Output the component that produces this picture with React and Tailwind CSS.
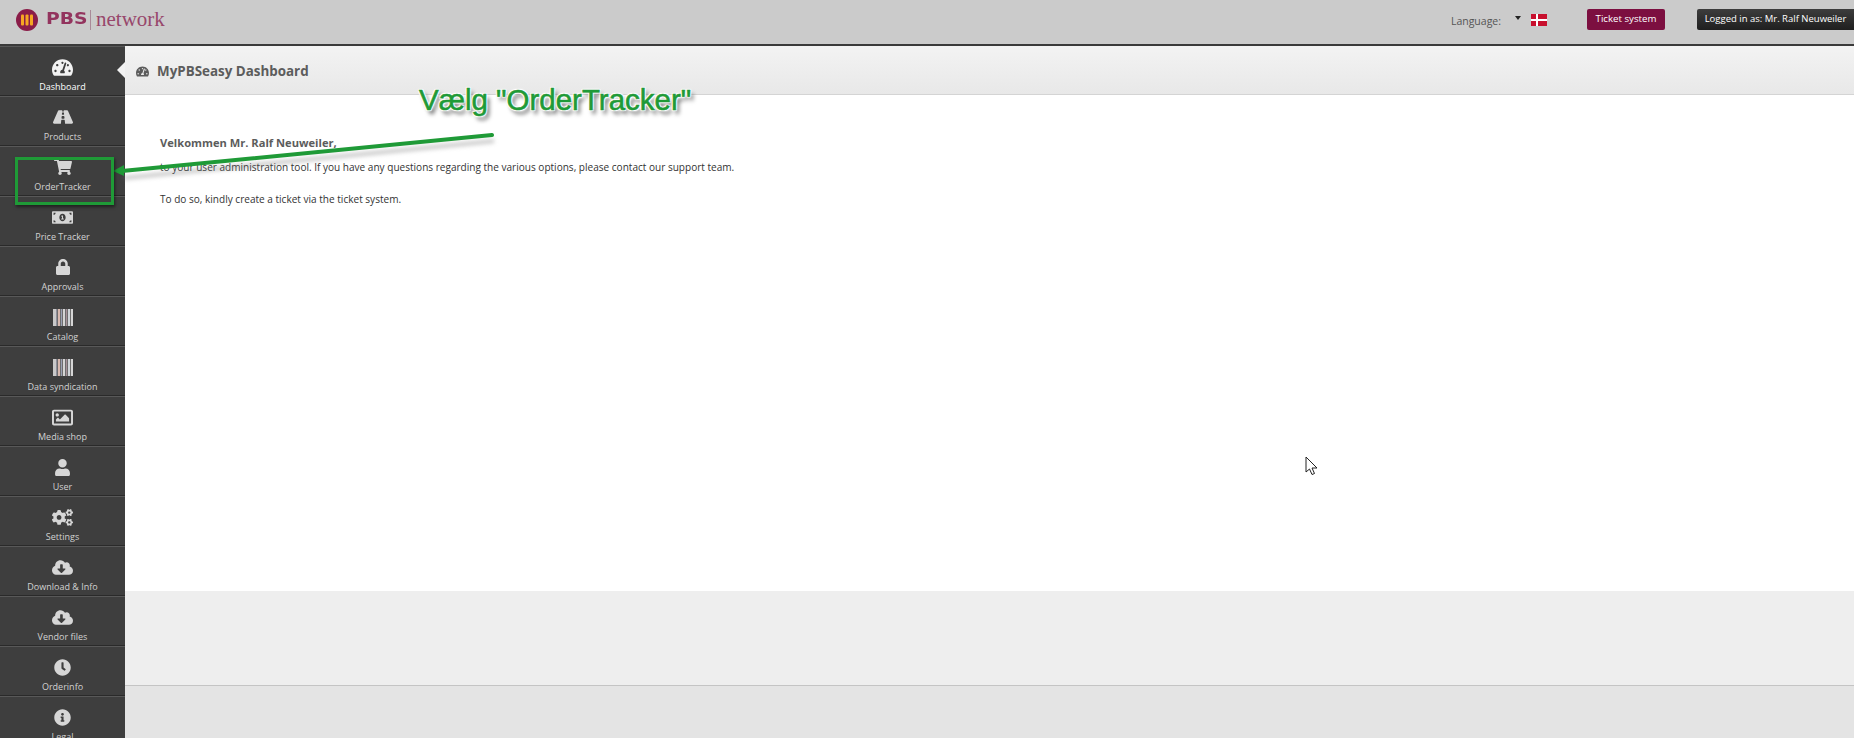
import React from "react";
import {
  FaTachometerAlt,
  FaRoad,
  FaShoppingCart,
  FaMoneyBillAlt,
  FaLock,
  FaRegImage,
  FaUser,
  FaCogs,
  FaCloudDownloadAlt,
  FaClock,
  FaInfoCircle,
} from "react-icons/fa";

function Barcode({ className }) {
  const bars = [
    [0, "#c9c9c9", 3],
    [3, "#8f8f9c", 1],
    [5, "#d8b9b0", 2],
    [8, "#9aa0b4", 1],
    [10, "#d4d4d4", 2],
    [13, "#a58f98", 1],
    [15, "#cfd4d8", 2],
    [18, "#d6d6d6", 2],
  ];
  return (
    <svg width="20" height="17" viewBox="0 0 20 17" className={className}>
      <rect width="20" height="17" fill="#6d6d6d" />
      {bars.map(([x, fill, w]) => (
        <rect key={x} x={x} width={w} height="17" fill={fill} />
      ))}
    </svg>
  );
}

const menu = [
  { label: "Dashboard", icon: FaTachometerAlt, size: "text-[21px]", active: true },
  { label: "Products", icon: FaRoad, size: "text-[20px]" },
  { label: "OrderTracker", icon: FaShoppingCart, size: "text-[18px]" },
  { label: "Price Tracker", icon: FaMoneyBillAlt, size: "text-[21px]" },
  { label: "Approvals", icon: FaLock, size: "text-[16px]" },
  { label: "Catalog", icon: Barcode },
  { label: "Data syndication", icon: Barcode },
  { label: "Media shop", icon: FaRegImage, size: "text-[21px]" },
  { label: "User", icon: FaUser, size: "text-[17px]" },
  { label: "Settings", icon: FaCogs, size: "text-[21px]" },
  { label: "Download & Info", icon: FaCloudDownloadAlt, size: "text-[21px]" },
  { label: "Vendor files", icon: FaCloudDownloadAlt, size: "text-[21px]" },
  { label: "Orderinfo", icon: FaClock, size: "text-[17px]" },
  { label: "Legal", icon: FaInfoCircle, size: "text-[17px]" },
];

function Logo() {
  return (
    <div className="mb-[5px] flex items-center pl-4">
      <svg width="22" height="22" viewBox="0 0 22 22" className="shrink-0">
        <circle cx="11" cy="11" r="11" fill="#8a1c48" />
        <rect x="5" y="5.5" width="3" height="11" rx="1" fill="#f5a623" />
        <rect x="9.5" y="5.5" width="3" height="11" rx="1" fill="#f5a623" />
        <rect x="14" y="5.5" width="3" height="11" rx="1" fill="#f5a623" />
      </svg>
      <span className="ml-2 w-[44px] origin-left scale-x-125 text-[15px] leading-none font-black text-[#93345e] font-['DejaVu_Sans',sans-serif]">
        PBS
      </span>
      <span className="h-[20px] w-px bg-[#a98a98]" />
      <span className="ml-[5px] text-[21px] leading-none text-[#98476b] font-['Liberation_Serif',serif]">
        network
      </span>
    </div>
  );
}

function TopBar() {
  return (
    <header className="flex h-[46px] shrink-0 items-center justify-between border-b-2 border-[#3a3a3a] bg-[#cbcbcb]">
      <Logo />
      <div className="flex items-center">
        <span className="text-[10.5px] text-[#555]">Language:</span>
        <span className="mb-[8px] ml-[14px] h-0 w-0 border-x-[3px] border-t-[4px] border-x-transparent border-t-[#222]" />
        <svg width="16" height="12" viewBox="0 0 16 12" className="mb-[5px] ml-[10px]">
          <rect width="16" height="12" fill="#c8102e" />
          <rect x="5" width="2" height="12" fill="#fff" />
          <rect y="5" width="16" height="2" fill="#fff" />
        </svg>
        <button className="mb-[5px] ml-[40px] h-[21px] w-[78px] rounded-[2px] bg-[#7c0f40] text-[9.7px] text-white">
          Ticket system
        </button>
        <button className="mb-[5px] ml-[32px] h-[21px] w-[157px] rounded-l-[2px] bg-gradient-to-b from-[#3d3d3d] to-[#1f1f1f] text-[9.5px] text-white">
          Logged in as: Mr. Ralf Neuweiler
        </button>
      </div>
    </header>
  );
}

function Sidebar() {
  return (
    <aside className="w-[125px] shrink-0 overflow-hidden bg-[#3e3e3e]">
      {menu.map((item) => {
        const Icon = item.icon;
        return (
          <div
            key={item.label}
            className="relative flex h-[50px] flex-col items-center border-b border-b-[#2a2a2a] pt-[10px] shadow-[inset_0_1px_0_#585858]"
          >
            <span className="flex h-[22px] items-center justify-center">
              <Icon
                className={`${item.size || ""} ${
                  item.active ? "text-[#f2f2f2]" : "text-[#d6d6d6]"
                }`}
              />
            </span>
            <span
              className={`mt-[1px] text-[9px] leading-[16px] ${
                item.active ? "text-white" : "text-[#d2d2d2]"
              }`}
            >
              {item.label}
            </span>
            {item.active && (
              <span className="absolute right-0 top-[16px] h-0 w-0 border-y-[8px] border-r-[8px] border-y-transparent border-r-[#f2f2f2]" />
            )}
          </div>
        );
      })}
    </aside>
  );
}

function Annotation() {
  return (
    <>
      <svg
        width="520"
        height="100"
        viewBox="0 0 520 100"
        className="pointer-events-none absolute left-0 top-[120px] overflow-visible"
      >
        <path d="M492 18 L122 55" stroke="#777" strokeOpacity="0.4" strokeWidth="4" fill="none" transform="translate(2 3)" className="blur-[2px]" />
        <path d="M492 15 L122 51" stroke="#1f9a37" strokeWidth="4" strokeLinecap="round" fill="none" />
        <path d="M113 51 L124 45 L124 56 Z" fill="#1f9a37" />
      </svg>
      <div className="pointer-events-none absolute left-[15px] top-[157px] h-[48px] w-[99px] border-[3px] border-[#1f9a37] shadow-[1px_2px_3px_rgba(0,0,0,0.5)]" />
      <div className="pointer-events-none absolute left-[419px] top-[81px] text-[29.5px] leading-[38px] text-[#1f9a37] font-['Liberation_Sans',sans-serif] [-webkit-text-stroke:0.6px_#1f9a37] [text-shadow:1px_1px_1px_#fff,-1px_-1px_1px_#fff,1px_-1px_1px_#fff,-1px_1px_1px_#fff,0_0_3px_#fff,3px_4px_4px_rgba(0,0,0,0.65)]">
        Vælg "OrderTracker"
      </div>
    </>
  );
}

export default function App() {
  return (
    <div className="relative flex h-[738px] w-[1854px] flex-col overflow-hidden bg-[#e4e4e4] font-['Open_Sans',sans-serif]">
      <TopBar />
      <div className="flex min-h-0 flex-1">
        <Sidebar />
        <main className="flex flex-1 flex-col">
          <div className="flex h-[49px] items-center border-b border-[#d4d4d4] bg-gradient-to-b from-[#f3f3f3] to-[#e8e8e8] pl-[11px] pt-[2px]">
            <FaTachometerAlt className="text-[13px] text-[#5c5c5c]" />
            <h1 className="ml-[8px] text-[13.4px] font-bold text-[#5c5c5c]">
              MyPBSeasy Dashboard
            </h1>
          </div>
          <div className="h-[496px] bg-white pl-[35px] pt-[40px]">
            <p className="text-[11.15px] leading-[16px] font-bold text-[#5c5c5c]">
              Velkommen Mr. Ralf Neuweiler,
            </p>
            <p className="mt-[8px] text-[10.06px] leading-[16px] text-[#333]">
              to your user administration tool. If you have any questions regarding the various options, please contact our support team.
            </p>
            <p className="mt-[16px] text-[10.06px] leading-[16px] text-[#333]">
              To do so, kindly create a ticket via the ticket system.
            </p>
          </div>
          <div className="h-[95px] border-b border-[#c4c4c4] bg-[#eeeeee]" />
        </main>
      </div>
      <Annotation />
      <svg width="14" height="20" viewBox="0 0 14 20" className="pointer-events-none absolute left-[1305px] top-[456px]">
        <path d="M1 1 L1 16 L4.5 13 L7 18.5 L9.5 17.5 L7 12 L12 12 Z" fill="#fff" stroke="#222" strokeWidth="1" />
      </svg>
    </div>
  );
}
